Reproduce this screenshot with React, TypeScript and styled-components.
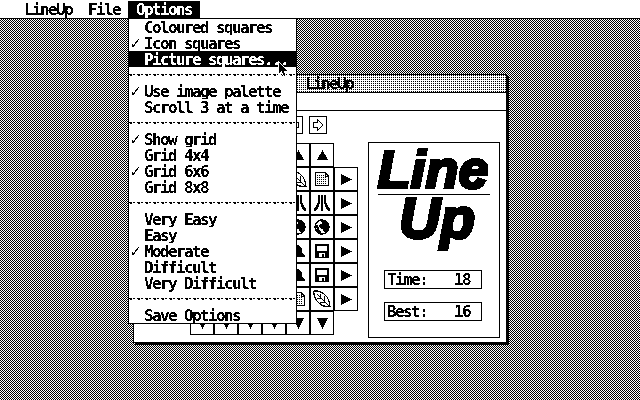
import { Fragment } from 'react';
import styled, { createGlobalStyle } from 'styled-components';

const GlobalStyle = createGlobalStyle`
  html, body {
    margin: 0;
    background: #fff;
  }
`;

const Screen = styled.div`
  position: relative;
  display: flex;
  flex-direction: column;
  width: 640px;
  height: 400px;
  overflow: hidden;
  color: #000;
  background: #fff;
  font-family: 'DejaVu Sans Mono', monospace;
  font-weight: 700;
  font-size: 16px;
  line-height: 16px;
  letter-spacing: -1.63px;
  white-space: pre;
  filter: url(#mono);
`;

const MenuBar = styled.div`
  display: flex;
  flex: none;
  height: 18px;
  padding-left: 16px;
  border-bottom: 1px solid #000;
`;

const MenuTitle = styled.div<{ $open?: boolean }>`
  height: 17px;
  margin-top: 1px;
  padding: 0 8px;
  line-height: 18px;
  background: ${(p) => (p.$open ? '#000' : '#fff')};
  color: ${(p) => (p.$open ? '#fff' : '#000')};
`;

const Desktop = styled.div`
  position: relative;
  flex: 1;
  background: repeating-conic-gradient(#000 0 25%, #fff 0 50%) 0 0 / 2px 2px;
`;

const Win = styled.div`
  position: absolute;
  left: 133px;
  top: 55px;
  display: flex;
  flex-direction: column;
  width: 372px;
  height: 267px;
  border: 1px solid #000;
  box-shadow: 2px 2px 0 #000;
  background: #fff;
`;

const TitleBar = styled.div`
  flex: none;
  height: 17px;
  padding-left: 171px;
  line-height: 18px;
  border-bottom: 1px solid #000;
  background: conic-gradient(#000 25%, #fff 0) 0 0 / 2px 2px;
`;

const InfoBar = styled.div`
  flex: none;
  height: 17px;
  border-bottom: 1px solid #000;
`;

const WinBody = styled.div`
  display: flex;
  flex: 1;
`;

const PlayArea = styled.div`
  display: flex;
  flex-direction: column;
  box-sizing: border-box;
  width: 224px;
  padding: 5px 0 0 32px;
`;

const Toolbar = styled.div`
  display: flex;
  justify-content: flex-end;
  gap: 6px;
  padding-right: 31px;
  margin-bottom: 9px;
`;

const ToolButton = styled.div`
  display: flex;
  align-items: center;
  justify-content: center;
  width: 18px;
  height: 18px;
  box-sizing: border-box;
  border: 1px solid #000;
`;

const Board = styled.div`
  display: grid;
  grid-template-columns: repeat(8, 24px);
  grid-auto-rows: 24px;
`;

const Cell = styled.div<{ $empty?: boolean }>`
  display: flex;
  align-items: center;
  justify-content: center;
  box-sizing: border-box;
  border: ${(p) => (p.$empty ? 'none' : '1px solid #000')};
`;

const LogoPanel = styled.div`
  display: flex;
  flex-direction: column;
  align-items: center;
  width: 130px;
  height: 194px;
  margin: 31px 0 0 10px;
  border: 1px solid #000;
  font-family: 'Liberation Sans', sans-serif;
`;

const LogoWord = styled.div<{ $size: number; $height: number; $shift: number; $top?: number }>`
  height: ${(p) => p.$height}px;
  margin-top: ${(p) => p.$top ?? 0}px;
  transform: translateX(${(p) => p.$shift}px);
  font-size: ${(p) => p.$size}px;
  line-height: ${(p) => p.$height}px;
  font-weight: 700;
  font-style: italic;
  letter-spacing: 0;
  -webkit-text-stroke: 3px #000;
`;

const LogoRule = styled.div`
  flex: none;
  width: 112px;
  height: 1px;
  margin: 1px 0 2px;
  background: #000;
`;

const Stat = styled.div<{ $first?: boolean }>`
  display: flex;
  justify-content: space-between;
  box-sizing: border-box;
  flex: none;
  align-self: flex-start;
  width: 98px;
  height: 19px;
  margin: ${(p) => (p.$first ? 30 : 13)}px 0 0 15px;
  padding: 1px 11px 0 2px;
  border: 1px solid #000;
  font-family: 'DejaVu Sans Mono', monospace;
  line-height: 16px;
`;

const Menu = styled.div`
  position: absolute;
  left: 128px;
  top: 0;
  width: 167px;
  border: 1px solid #000;
  border-top: none;
  background: #fff;
`;

const MenuRow = styled.div<{ $active?: boolean }>`
  position: relative;
  display: flex;
  box-sizing: border-box;
  height: 16px;
  padding: 2px 0 0 15px;
  line-height: 14px;
  background: ${(p) => (p.$active ? '#000' : '#fff')};
  color: ${(p) => (p.$active ? '#fff' : '#000')};
`;

const Tick = styled.span`
  position: absolute;
  left: 0;
  top: 0;
  line-height: 18px;
  font-family: 'DejaVu Sans', sans-serif;
  font-weight: 400;
  font-size: 16px;
  letter-spacing: 0;
`;

const Separator = styled.div`
  height: 16px;
  background:
    repeating-linear-gradient(90deg, #000 0 3px, #fff 3px 4px, #000 4px 6px, #fff 6px 8px) 0 7px / 100% 1px no-repeat,
    repeating-linear-gradient(90deg, #fff 0 1px, #000 1px 3px, #fff 3px 8px) 0 8px / 100% 1px no-repeat;
`;

const Pointer = styled.svg`
  position: absolute;
  left: 277px;
  top: 41px;
`;

const FilterDefs = styled.svg`
  position: absolute;
`;

const ArrowGlyph = styled.svg<{ $flip?: boolean }>`
  transform: ${(p) => (p.$flip ? 'scaleX(-1)' : 'none')};
`;

const LeafGlyph = styled.svg`
  margin: -1px;
`;

type Item = { label: string; checked?: boolean; active?: boolean } | 'sep';

const menuItems: Item[] = [
  { label: 'Coloured squares' },
  { label: 'Icon squares', checked: true },
  { label: 'Picture squares...', active: true },
  'sep',
  { label: 'Use image palette', checked: true },
  { label: 'Scroll 3 at a time' },
  'sep',
  { label: 'Show grid', checked: true },
  { label: 'Grid 4x4' },
  { label: 'Grid 6x6', checked: true },
  { label: 'Grid 8x8' },
  'sep',
  { label: 'Very Easy' },
  { label: 'Easy' },
  { label: 'Moderate', checked: true },
  { label: 'Difficult' },
  { label: 'Very Difficult' },
  'sep',
  { label: 'Save Options' },
];

type IconName = 'doc' | 'leaf' | 'atari' | 'globe' | 'disk' | 'bell';

const rows: IconName[][] = [
  ['disk', 'globe', 'bell', 'atari', 'leaf', 'doc'],
  ['globe', 'doc', 'leaf', 'bell', 'atari', 'atari'],
  ['leaf', 'disk', 'atari', 'doc', 'globe', 'globe'],
  ['atari', 'leaf', 'doc', 'globe', 'bell', 'disk'],
  ['doc', 'bell', 'globe', 'leaf', 'bell', 'disk'],
  ['bell', 'atari', 'disk', 'globe', 'doc', 'leaf'],
];

const Icon = ({ name }: { name: IconName }) => {
  if (name === 'doc') {
    return (
      <svg width="16" height="16" viewBox="0 0 16 16" shapeRendering="crispEdges">
        <path d="M1.5 1.5H11L14.5 5V14.5H1.5Z" fill="#fff" stroke="#000" />
        <path d="M11 1v4h4" fill="none" stroke="#000" />
        {[4, 6, 8, 10, 12].map((y) => (
          <path key={y} d={`M3 ${y + 0.5}H${y < 6 ? 10 : 13}`} stroke="#000" strokeDasharray="1 1" />
        ))}
      </svg>
    );
  }
  if (name === 'leaf') {
    return (
      <LeafGlyph width="18" height="18" viewBox="0 0 18 18">
        <path d="M1 1C9 0 17 7 17 17C7 17 0 9 1 1Z" fill="#fff" stroke="#000" strokeWidth="1.2" />
        <path d="M4 4L16 16M7 3.5V7M11 6V11M4 8H8M7 12H12" fill="none" stroke="#000" />
      </LeafGlyph>
    );
  }
  if (name === 'atari') {
    return (
      <svg width="16" height="16" viewBox="0 0 16 16">
        <path d="M7 0H9V16H7ZM4 0H6V5C6 10 4 14 1 16H0V13C3 11 4 8 4 5ZM10 0H12V5C12 8 13 11 16 13V16H15C12 14 10 10 10 5Z" />
      </svg>
    );
  }
  if (name === 'globe') {
    return (
      <svg width="16" height="16" viewBox="0 0 16 16">
        <circle cx="8" cy="8" r="7" fill="#fff" stroke="#000" strokeWidth="1.4" />
        <path d="M6 1H12L15 5V10L12 13H10L9 10L6 9L5 6L8 5V3ZM2 6H4L5 10L7 13L6 15L3 12Z" />
      </svg>
    );
  }
  if (name === 'disk') {
    return (
      <svg width="16" height="16" viewBox="0 0 16 16" shapeRendering="crispEdges">
        <path d="M1 1H15V15H1Z" />
        <path d="M3 3H13V8H3ZM5 10H11V14H5Z" fill="#fff" />
        <path d="M8 11H10V14H8Z" />
      </svg>
    );
  }
  return (
    <svg width="16" height="16" viewBox="0 0 16 16">
      <path d="M8 1L10 4L12 6V10L15 12V14H1V12L4 10V6L6 4Z" />
    </svg>
  );
};

const Arrow = ({ dir }: { dir: 'up' | 'down' | 'right' }) => {
  const points = {
    up: '0,10 5.5,0 11,10',
    down: '0,0 11,0 5.5,11',
    right: '0,0 11,5.5 0,11',
  }[dir];
  return (
    <svg width="11" height="11" viewBox="0 0 11 11">
      <polygon points={points} />
    </svg>
  );
};

const OutlineArrow = ({ flip }: { flip?: boolean }) => (
  <ArrowGlyph $flip={flip} width="10" height="12" viewBox="0 0 10 12">
    <path d="M4.5 0.5L9.5 6L4.5 11.5V8.5H0.5V3.5H4.5Z" fill="#fff" stroke="#000" />
  </ArrowGlyph>
);

const App = () => {
  return (
    <>
      <GlobalStyle />
      <FilterDefs width="0" height="0">
        <filter id="mono" colorInterpolationFilters="sRGB" x="0" y="0" width="100%" height="100%">
          <feColorMatrix type="saturate" values="0" />
          <feComponentTransfer>
            <feFuncR type="discrete" tableValues="0 1" />
            <feFuncG type="discrete" tableValues="0 1" />
            <feFuncB type="discrete" tableValues="0 1" />
          </feComponentTransfer>
        </filter>
      </FilterDefs>
      <Screen>
        <MenuBar>
          <MenuTitle>LineUp</MenuTitle>
          <MenuTitle>File</MenuTitle>
          <MenuTitle $open>Options</MenuTitle>
        </MenuBar>
        <Desktop>
          <Win>
            <TitleBar>LineUp</TitleBar>
            <InfoBar />
            <WinBody>
              <PlayArea>
                <Toolbar>
                  <ToolButton>
                    <OutlineArrow flip />
                  </ToolButton>
                  <ToolButton>
                    <OutlineArrow />
                  </ToolButton>
                </Toolbar>
                <Board>
                  <Cell $empty />
                  {rows[0].map((_, i) => (
                    <Cell key={i}>
                      <Arrow dir="up" />
                    </Cell>
                  ))}
                  <Cell $empty />
                  {rows.map((row, r) => (
                    <Fragment key={r}>
                      <Cell />
                      {row.map((name, c) => (
                        <Cell key={c}>
                          <Icon name={name} />
                        </Cell>
                      ))}
                      <Cell>
                        <Arrow dir="right" />
                      </Cell>
                    </Fragment>
                  ))}
                  <Cell $empty />
                  {rows[0].map((_, i) => (
                    <Cell key={i}>
                      <Arrow dir="down" />
                    </Cell>
                  ))}
                  <Cell $empty />
                </Board>
              </PlayArea>
              <LogoPanel>
                <LogoWord $size={54} $height={47} $shift={-1} $top={3}>
                  Line
                </LogoWord>
                <LogoRule />
                <LogoWord $size={57} $height={43} $shift={3}>
                  Up
                </LogoWord>
                <Stat $first>
                  <span>Time:</span>
                  <span>18</span>
                </Stat>
                <Stat>
                  <span>Best:</span>
                  <span>16</span>
                </Stat>
              </LogoPanel>
            </WinBody>
          </Win>
          <Menu>
            {menuItems.map((item, i) =>
              item === 'sep' ? (
                <Separator key={i} />
              ) : (
                <MenuRow key={i} $active={item.active}>
                  {item.checked && <Tick>✓</Tick>}
                  {item.label}
                </MenuRow>
              ),
            )}
          </Menu>
          <Pointer width="12" height="19" viewBox="0 0 12 19">
            <path d="M1.5 1.5V14.5L4.5 11.5L7 17H9.5L7.5 11H11.5Z" fill="#000" stroke="#fff" />
          </Pointer>
        </Desktop>
      </Screen>
    </>
  );
};

export default App;
